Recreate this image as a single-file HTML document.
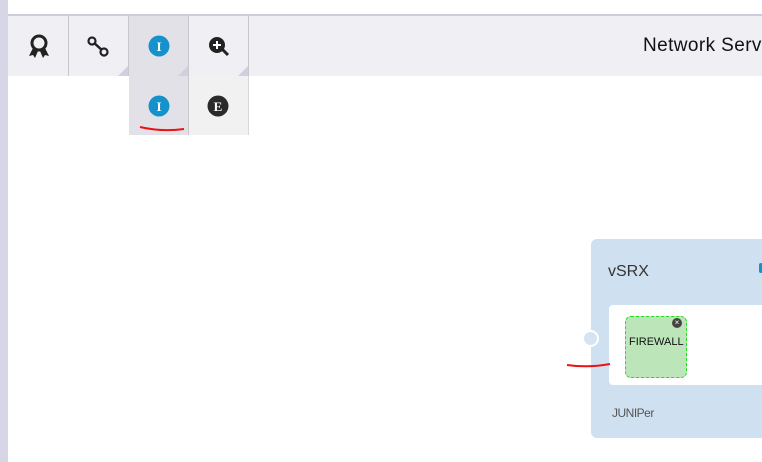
<html><head><style>
body{margin:0;width:762px;height:462px;overflow:hidden;background:#fff;font-family:"Liberation Sans",sans-serif;position:relative}
.a{position:absolute}
</style></head><body>
<div class="a" style="left:0;top:0;width:8px;height:462px;background:#d6d6e6"></div>
<div class="a" style="left:8px;top:14px;width:754px;height:2px;background:#cdcddd"></div>
<div class="a" style="left:8px;top:16px;width:754px;height:60px;background:#efeff4"></div>
<div class="a" style="left:129px;top:16px;width:60px;height:60px;background:#e1e1e7"></div>
<div class="a" style="left:68px;top:16px;width:1px;height:60px;background:#c8c8cc"></div>
<div class="a" style="left:128px;top:16px;width:1px;height:60px;background:#c8c8cc"></div>
<div class="a" style="left:188px;top:16px;width:1px;height:60px;background:#c8c8cc"></div>
<div class="a" style="left:248px;top:16px;width:1px;height:60px;background:#c8c8cc"></div>
<svg class="a" style="left:0;top:0" width="260" height="140">
<polygon points="128,76 118,76 128,66" fill="#cfcfde"/>
<polygon points="188,76 178,76 188,66" fill="#cfcfde"/>
<polygon points="248,76 238,76 248,66" fill="#cfcfde"/>
<circle cx="39" cy="43" r="7" fill="none" stroke="#222" stroke-width="3"/>
<polygon points="33,48 29,56 33,55 35,58 38,51" fill="#222"/><polygon points="45,48 49,56 45,55 43,58 40,51" fill="#222"/>
<line x1="92" y1="41" x2="104" y2="52" stroke="#222" stroke-width="2.5"/>
<circle cx="92" cy="41" r="3.5" fill="#efeff4" stroke="#222" stroke-width="2.2"/>
<circle cx="104" cy="52" r="3.5" fill="#efeff4" stroke="#222" stroke-width="2.2"/>
<circle cx="159" cy="46" r="10.5" fill="#1591cc"/>
<text x="159" y="51" font-family="Liberation Serif" font-weight="bold" font-size="13" fill="#fff" text-anchor="middle">I</text>
<line x1="222" y1="49" x2="228" y2="55" stroke="#222" stroke-width="3"/>
<circle cx="217" cy="45" r="8" fill="#222"/>
<path d="M217 41v8M213 45h8" stroke="#fff" stroke-width="2"/>
</svg>
<div class="a" style="left:129px;top:76px;width:59px;height:59px;background:#e1e1e7"></div>
<div class="a" style="left:188px;top:76px;width:1px;height:59px;background:#c8c8cc"></div>
<div class="a" style="left:189px;top:76px;width:59px;height:59px;background:#f1f1f2"></div>
<div class="a" style="left:248px;top:76px;width:1px;height:59px;background:#d8d8d8"></div>
<svg class="a" style="left:0;top:0" width="260" height="140">
<circle cx="159" cy="106" r="10.5" fill="#1591cc"/>
<text x="159" y="111" font-family="Liberation Serif" font-weight="bold" font-size="13" fill="#fff" text-anchor="middle">I</text>
<circle cx="218" cy="106" r="10.5" fill="#2a2a2a"/>
<text x="218" y="111" font-family="Liberation Serif" font-weight="bold" font-size="13" fill="#fff" text-anchor="middle">E</text>
<path d="M140 127 Q162 132 184 129" stroke="#e11" stroke-width="2" fill="none"/>
</svg>
<div class="a" style="left:643px;top:35px;font-size:19px;color:#111;white-space:nowrap;letter-spacing:0.4px">Network Serv</div>
<div class="a" style="left:591px;top:239px;width:180px;height:199px;background:#cfe1f0;border-radius:6px"></div>
<div class="a" style="left:759px;top:263px;width:4px;height:10px;background:#1591cc;border-radius:2px"></div>
<div class="a" style="left:608px;top:263px;font-size:16px;color:#333">vSRX</div>
<div class="a" style="left:609px;top:305px;width:160px;height:80px;background:#fff;border-radius:4px"></div>
<div class="a" style="left:625px;top:316px;width:60px;height:60px;background:#bce6ba;border:1px dashed #22dd22;border-radius:6px"></div>
<div class="a" style="left:629px;top:336px;font-size:11px;color:#111">FIREWALL</div>
<div class="a" style="left:672px;top:318px;width:10px;height:10px;border-radius:50%;background:#444;color:#fff;font-size:8px;line-height:10px;text-align:center">×</div>
<div class="a" style="left:582px;top:330px;width:13px;height:13px;border-radius:50%;background:#d6e4f1;border:2px solid #fff"></div>
<svg class="a" style="left:560px;top:355px" width="60" height="20"><path d="M7 10 Q28 13 50 9" stroke="#e11" stroke-width="2" fill="none"/></svg>
<div class="a" style="left:612px;top:406px;font-size:12px;color:#555;letter-spacing:-0.5px">JUNIPer</div>
</body></html>
